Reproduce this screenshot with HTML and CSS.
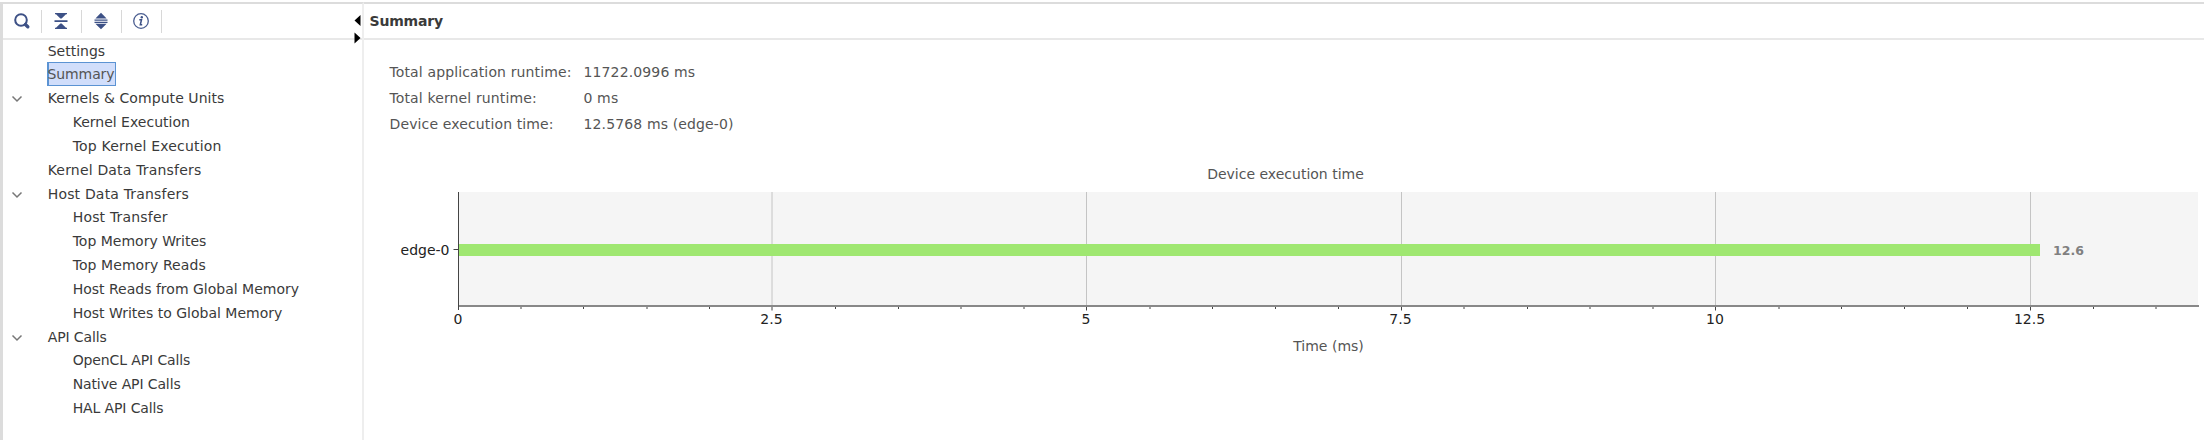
FILE: index.html
```html
<!DOCTYPE html>
<html lang="en">
<head>
<meta charset="utf-8">
<title>Profile Summary</title>
<link rel="stylesheet" href="styles.css">
</head>
<body>
<div class="app">
  <aside class="sidebar">
    <div class="toolbar">
      <span class="tool"><svg width="20" height="20" viewBox="0 0 20 20"><circle cx="9" cy="9" r="5.8" fill="none" stroke="#3d5186" stroke-width="2"/><path d="M13.400 13.600 15.800 15.800" stroke="#3d5186" stroke-width="3.400" stroke-linecap="round"/></svg></span>
      <span class="tool"><svg width="20" height="20" viewBox="0 0 20 20" fill="#3d5186"><path d="M4 2h12v1.200h-1L10.600 7.600H9.400L5 3.200H4zM3.500 9.200h13v1.800h-13zM4 18h12v-1.200h-1L10.600 12.600H9.400L5 16.800H4z"/></svg></span>
      <span class="tool"><svg width="20" height="20" viewBox="0 0 20 20" fill="#3d5186"><path d="M10 1.800 15.600 7.600H4.400zM3.500 8.400h13v1.300h-13zM3.500 10.700h13v1.300h-13zM4.400 12.700h11.200L10 18.300z"/></svg></span>
      <span class="tool"><svg width="20" height="20" viewBox="0 0 20 20"><circle cx="10" cy="10" r="7.300" fill="none" stroke="#4a5d90" stroke-width="1.300"/><circle cx="10.800" cy="6.200" r="1.200" fill="#3d5186"/><path d="M8.300 8.800h2.200L9.300 13.800h1.900" fill="none" stroke="#3d5186" stroke-width="1.500"/></svg></span>
    </div>
    <ul class="tree">
      <li class="row"><span class="label">Settings</span></li>
      <li class="row"><span class="label selected">Summary</span></li>
      <li class="row"><svg class="chevron" width="12" height="8" viewBox="0 0 12 8"><path d="M1.500 1.500 6 6l4.500-4.500"/></svg><span class="label loose">Kernels &amp; Compute Units</span></li>
      <li class="row child"><span class="label">Kernel Execution</span></li>
      <li class="row child"><span class="label wide">Top Kernel Execution</span></li>
      <li class="row"><span class="label wide">Kernel Data Transfers</span></li>
      <li class="row"><svg class="chevron" width="12" height="8" viewBox="0 0 12 8"><path d="M1.500 1.500 6 6l4.500-4.500"/></svg><span class="label wide">Host Data Transfers</span></li>
      <li class="row child"><span class="label wide">Host Transfer</span></li>
      <li class="row child"><span class="label">Top Memory Writes</span></li>
      <li class="row child"><span class="label loose">Top Memory Reads</span></li>
      <li class="row child"><span class="label">Host Reads from Global Memory</span></li>
      <li class="row child"><span class="label">Host Writes to Global Memory</span></li>
      <li class="row"><svg class="chevron" width="12" height="8" viewBox="0 0 12 8"><path d="M1.500 1.500 6 6l4.500-4.500"/></svg><span class="label tight">API Calls</span></li>
      <li class="row child"><span class="label tight">OpenCL API Calls</span></li>
      <li class="row child"><span class="label tight">Native API Calls</span></li>
      <li class="row child"><span class="label tight">HAL API Calls</span></li>
    </ul>
    <svg class="sash" width="8" height="30" viewBox="0 0 8 30"><path d="M6.500 0v11L.5 5.500zM.5 17.500v11l6-5.500z"/></svg>
  </aside>
  <main class="content">
    <h1 class="title">Summary</h1>
    <dl class="facts">
      <dt>Total application runtime:</dt><dd>11722.0996 ms</dd>
      <dt>Total kernel runtime:</dt><dd>0 ms</dd>
      <dt>Device execution time:</dt><dd>12.5768 ms (edge-0)</dd>
    </dl>
    <svg class="chart" width="1840" height="220" viewBox="364 160 1840 220">
      <text class="heading" x="1285.500" y="179.400" text-anchor="middle">Device execution time</text>
      <rect x="458" y="192" width="1740" height="114" fill="#f5f5f5"/>
      <path class="grid" d="M772 192v113M1086.500 192v113M1401.500 192v113M1715.500 192v113M2030.500 192v113"/>
      <rect x="459" y="244" width="1581" height="12" fill="#9fe771"/>
      <path class="axis-x" d="M458 306H2199"/>
      <path class="axis-y" d="M458.500 192V310"/>
      <path class="tick" d="M453.500 249.500h5M772 307v3.500M1086.500 307v3.500M1401.500 307v3.500M1715.500 307v3.500M2030.500 307v3.500"/>
      <path class="tick" d="M521 307v2M583.500 307v2M647 307v2M709.500 307v2M835.500 307v2M898.500 307v2M961 307v2M1024 307v2M1150 307v2M1212.500 307v2M1275.500 307v2M1338.500 307v2M1464 307v2M1527.500 307v2M1590 307v2M1653 307v2M1779 307v2M1841.500 307v2M1904.500 307v2M1967.500 307v2M2093.500 307v2M2156 307v2"/>
      <g class="scale">
        <text x="449.500" y="255" text-anchor="end">edge-0</text>
        <g text-anchor="middle">
          <text x="458" y="324.400">0</text><text x="771.500" y="324.400">2.5</text><text x="1086" y="324.400">5</text><text x="1400.500" y="324.400">7.5</text><text x="1715" y="324.400">10</text><text x="2029.500" y="324.400">12.5</text>
        </g>
      </g>
      <text class="value" x="2053" y="255.400">12.6</text>
      <text class="heading" x="1328.500" y="351" text-anchor="middle">Time (ms)</text>
    </svg>
  </main>
</div>
</body>
</html>
```
FILE: styles.css
```css
* { box-sizing: border-box; }
body {
  margin: 0;
  background: #fff;
  color: #3a3a3a;
  font: 14px "DejaVu Sans", sans-serif;
  overflow: hidden;
}
.app {
  display: flex;
  height: 440px;
  border-top: 2px solid #fff;
}
.sidebar {
  position: relative;
  width: 364px;
  border-top: 2px solid #dcdcdc;
  border-left: 3px solid #dcdcdc;
  border-right: 2px solid #eee;
}
.toolbar {
  display: flex;
  align-items: center;
  height: 36px;
  border-bottom: 2px solid #e8e8e8;
}
.tool {
  display: flex;
  align-items: center;
  justify-content: center;
  width: 40px;
  height: 23px;
  padding-right: 1px;
  border-right: 1px solid #d8d8d8;
}
.tool:first-child { width: 39px; }
.tree { list-style: none; margin: -1.300px 0 0; padding: 0; }
.row {
  display: flex;
  align-items: center;
  height: 23.830px;
  padding-left: 44px;
  white-space: nowrap;
}
.child { padding-left: 69px; }
.label { padding-left: .700px; }
.loose { letter-spacing: .070px; }
.wide { letter-spacing: .180px; }
.tight { letter-spacing: -.120px; }
.selected {
  height: 24px;
  width: 69px;
  line-height: 22px;
  border: 1px solid #5b93d3;
  background: #d1defb;
  box-shadow: inset 1px 0 #5b93d3;
  padding-left: 0;
  text-indent: -.500px;
  color: #555;
  letter-spacing: -.1px;
}
.chevron {
  margin: 2px 24px 0 -36px;
  width: 12px;
  fill: none;
  stroke: #777;
  stroke-width: 1.500;
}
.sash { position: absolute; left: 351px; top: 11px; }
.content {
  width: 1840px;
  border-top: 2px solid #dcdcdc;
}
.title {
  margin: 0;
  height: 36px;
  padding-left: 5.500px;
  border-bottom: 2px solid #e8e8e8;
  font-size: 14px;
  line-height: 34px;
  letter-spacing: -.2px;
}
.facts {
  display: grid;
  grid-template-columns: 194px auto;
  grid-auto-rows: 26.200px;
  align-items: center;
  margin: 0;
  padding: 19px 0 0 25.500px;
  height: 120px;
  color: #555;
  letter-spacing: .130px;
}
.facts dd { margin: 0; }
.chart { display: block; }
.heading { fill: #555; }
.scale { fill: #222; }
.value { fill: #808080; font-size: 12.500px; font-weight: bold; }
.grid { fill: none; stroke: #c4c4c4; stroke-width: 1; }
.axis-x { stroke: #888; stroke-width: 2; }
.axis-y { stroke: #444; stroke-width: 1; }
.tick { fill: none; stroke: #444; stroke-width: 1; }
```
